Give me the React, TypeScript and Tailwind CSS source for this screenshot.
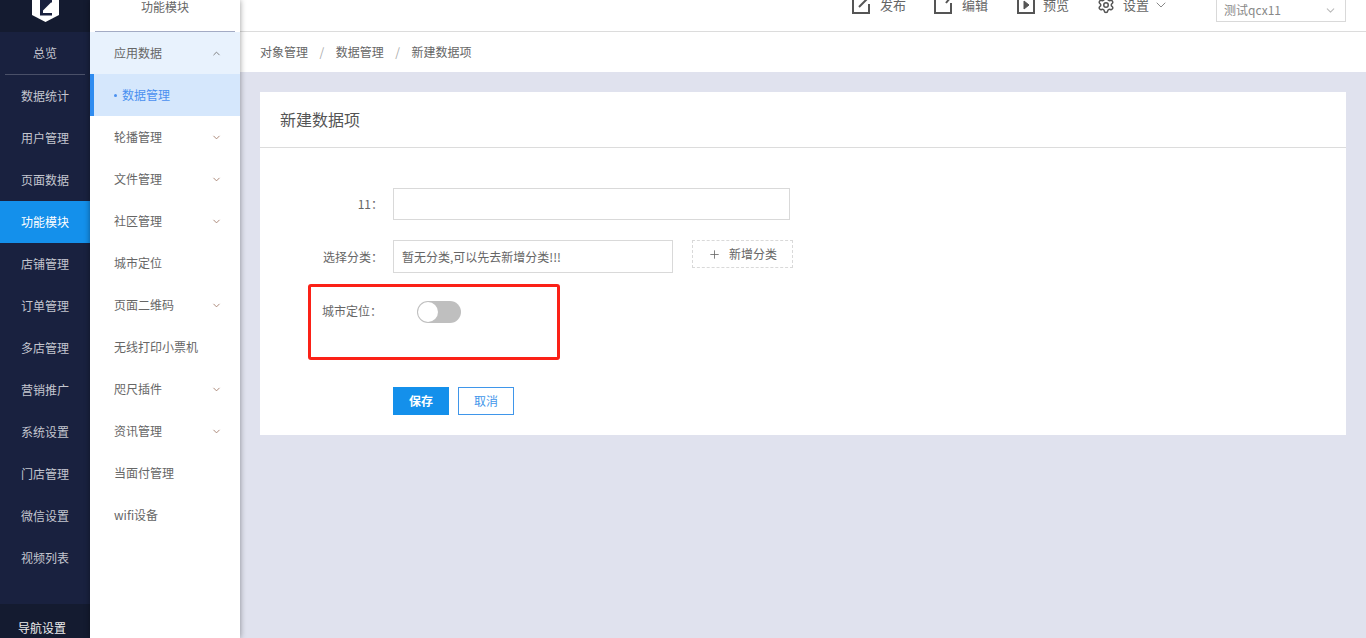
import { ChevronDown, ChevronUp, Plus, Settings } from "lucide-react";

const mainNav = ["数据统计", "用户管理", "页面数据", "功能模块", "店铺管理", "订单管理", "多店管理", "营销推广", "系统设置", "门店管理", "微信设置", "视频列表"];

const subNav = [
  { name: "轮播管理", arrow: true },
  { name: "文件管理", arrow: true },
  { name: "社区管理", arrow: true },
  { name: "城市定位", arrow: false },
  { name: "页面二维码", arrow: true },
  { name: "无线打印小票机", arrow: false },
  { name: "咫尺插件", arrow: true },
  { name: "资讯管理", arrow: true },
  { name: "当面付管理", arrow: false },
  { name: "wifi设备", arrow: false },
];

function PublishIcon() {
  return (
    <svg width="20" height="20" viewBox="0 0 20 20" fill="none" stroke="#555" strokeWidth="2">
      <path d="M11 2H2v16h16V9" />
      <path d="M8 12L17 3" />
    </svg>
  );
}

function EditIcon() {
  return (
    <svg width="20" height="20" viewBox="0 0 20 20" fill="none" stroke="#555" strokeWidth="2">
      <path d="M11 2H2v16h16V8" />
      <path d="M13 8L17 3" />
    </svg>
  );
}

function PreviewIcon() {
  return (
    <svg width="18" height="20" viewBox="0 0 18 20" fill="none" stroke="#555" strokeWidth="2">
      <path d="M1 2h16v16H1z" />
      <path d="M7 6l5 4-5 4z" fill="#555" strokeWidth="1" />
    </svg>
  );
}

export default function App() {
  return (
    <div className="flex h-[638px] w-[1366px] overflow-hidden bg-[#e0e2ee] font-['Noto_Sans_CJK_SC','Liberation_Sans',sans-serif] text-xs">
      {/* Main sidebar */}
      <div className="flex w-[90px] shrink-0 flex-col bg-[#19213f] text-[#c4c6cf]">
        <div className="flex h-8 items-start justify-center overflow-hidden bg-[#141b30]">
          <svg width="27" height="22" viewBox="0 0 27 22">
            <path d="M0 0h27v15l-13.500 7L0 15z" fill="#fff" />
            <path d="M8 0h12v2.500h-1L11 10.500V13h9v2.500H8z" fill="#19213f" />
          </svg>
        </div>
        <div className="mx-[5px] flex h-[43px] items-center justify-center border-b border-[#4a5068]">总览</div>
        <div>
          {mainNav.map((name) => (
            <div
              key={name}
              className={`flex h-[42px] items-center justify-center ${name === "功能模块" ? "bg-[#1490eb] text-white" : ""}`}
            >
              {name}
            </div>
          ))}
        </div>
        <div className="mt-auto flex h-[34px] items-center justify-center bg-[#141b30] pt-[14px] pr-[6px] text-[#ececec]">导航设置</div>
      </div>

      {/* Sub sidebar */}
      <div className="relative z-10 w-[150px] shrink-0 bg-white text-[#666] shadow-[0_0_6px_rgba(0,0,0,0.4)]">
        <div className="mx-[5px] h-8 border-b border-[#a3abc4] pt-px text-center leading-[12px]">功能模块</div>
        <div className="flex h-[42px] items-center justify-between bg-[#e8f2fd] pr-[18px] pl-6">
          应用数据
          <ChevronUp size={11} className="text-[#777]" />
        </div>
        <div className="flex h-[42px] items-center gap-[5px] border-l-4 border-[#2f8cf0] bg-[#d5e7fc] pl-5 text-[#4a90f0]">
          <span className="h-[3px] w-[3px] rounded-full bg-[#4a90f0]" />
          数据管理
        </div>
        {subNav.map((item) => (
          <div key={item.name} className="flex h-[42px] items-center justify-between pr-[18px] pl-6">
            {item.name}
            {item.arrow && <ChevronDown size={11} className="text-[#a5806f]" />}
          </div>
        ))}
      </div>

      {/* Content */}
      <div className="min-w-0 flex-1">
        <div className="h-8 overflow-hidden border-b border-[#dcdcdc] bg-white text-[13px] text-[#666]">
          <div className="flex h-[10px] items-center justify-end pr-5">
            <div className="flex items-center gap-[9px]">
              <PublishIcon />
              发布
            </div>
            <div className="ml-[27px] flex items-center gap-[9px]">
              <EditIcon />
              编辑
            </div>
            <div className="ml-[29px] flex items-center gap-2">
              <PreviewIcon />
              预览
            </div>
            <div className="ml-[28px] flex items-center gap-2">
              <Settings size={18} className="text-[#555]" />
              设置
              <ChevronDown size={16} strokeWidth={1.5} className="-ml-1 text-[#888]" />
            </div>
            <div className="mt-[2px] ml-[47px] flex h-8 w-[130px] items-center justify-between border border-[#d9d9d9] pt-2 pr-2 pl-[7px] text-xs text-[#888]">
              测试qcx11
              <ChevronDown size={13} className="text-[#bbb]" />
            </div>
          </div>
        </div>

        <div className="flex h-10 items-center gap-[11.5px] bg-white pl-5 text-[#666]">
          <span>对象管理</span>
          <span className="text-[#aaa]">/</span>
          <span>数据管理</span>
          <span className="text-[#aaa]">/</span>
          <span>新建数据项</span>
        </div>

        <div className="mx-5 mt-5 h-[343px] bg-white text-[#666]">
          <div className="flex h-14 items-center border-b border-[#dcdcdc] pb-[2px] pl-5 text-base text-[#555]">新建数据项</div>

          <div className="pt-10 pl-[48px]">
            <div className="flex items-center">
              <div className="w-[85px] pr-[10px] text-right">11：</div>
              <div className="h-8 w-[397px] border border-[#d9d9d9]" />
            </div>

            <div className="mt-5 flex items-start">
              <div className="flex h-[33px] w-[85px] items-center justify-end pr-[10px]">选择分类：</div>
              <div className="flex h-[33px] w-[280px] items-center border border-[#d9d9d9] pl-2">暂无分类,可以先去新增分类!!!</div>
              <div className="ml-[19px] flex h-7 w-[101px] items-center justify-center gap-2 border border-dashed border-[#d9d9d9]">
                <Plus size={13} strokeWidth={1.5} />
                新增分类
              </div>
            </div>

            <div className="mt-[11px] flex h-[76px] w-[252px] items-start rounded-[3px] border-[3px] border-[#fb2117]">
              <div className="mt-[14px] ml-[11px] w-[76px] leading-[20px]">城市定位：</div>
              <div className="mt-[14px] ml-[19px] flex h-[22px] w-[44px] items-center rounded-full bg-[#bfbfbf] pl-px">
                <div className="h-5 w-5 rounded-full bg-white" />
              </div>
            </div>

            <div className="mt-[27px] ml-[85px] flex gap-[9px]">
              <div className="flex h-7 w-14 items-center justify-center bg-[#1490eb] font-bold text-white">保存</div>
              <div className="flex h-7 w-14 items-center justify-center border border-[#3f96ea] text-[#3f96ea]">取消</div>
            </div>
          </div>
        </div>
      </div>
    </div>
  );
}
